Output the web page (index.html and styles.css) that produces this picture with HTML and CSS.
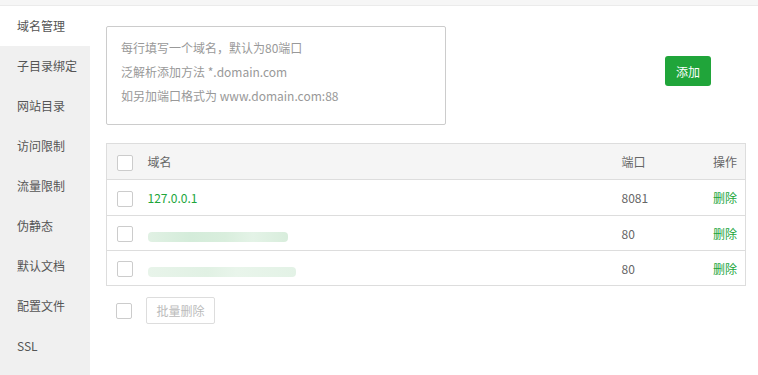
FILE: index.html
```html
<!DOCTYPE html>
<html>

<head>
  <title>站点修改</title>
  <link rel="stylesheet" href="styles.css">
</head>

<body>
  <div class="top-strip"></div>

  <div class="layout">
    <!-- Left tab menu -->
    <ul class="side-menu">
      <li class="active">域名管理</li>
      <li>子目录绑定</li>
      <li>网站目录</li>
      <li>访问限制</li>
      <li>流量限制</li>
      <li>伪静态</li>
      <li>默认文档</li>
      <li>配置文件</li>
      <li>SSL</li>
    </ul>

    <div class="content">
      <!-- Domain input -->
      <div class="add-row">
        <div class="domain-input">
          <p>每行填写一个域名，默认为80端口</p>
          <p>泛解析添加方法 *.domain.com</p>
          <p>如另加端口格式为 www.domain.com:88</p>
        </div>
        <button class="btn-green">添加</button>
      </div>

      <!-- Domain list -->
      <table class="domain-table">
        <colgroup>
          <col class="w-check">
          <col>
          <col class="w-port">
          <col class="w-op">
        </colgroup>
        <thead>
          <tr>
            <th class="col-check"><span class="checkbox"></span></th>
            <th>域名</th>
            <th>端口</th>
            <th class="col-op">操作</th>
          </tr>
        </thead>
        <tbody>
          <tr class="first">
            <td class="col-check"><span class="checkbox"></span></td>
            <td><a class="green">127.0.0.1</a></td>
            <td>8081</td>
            <td class="col-op"><a class="green">删除</a></td>
          </tr>
          <tr>
            <td class="col-check"><span class="checkbox"></span></td>
            <td><span class="blurred"></span></td>
            <td>80</td>
            <td class="col-op"><a class="green">删除</a></td>
          </tr>
          <tr>
            <td class="col-check"><span class="checkbox"></span></td>
            <td><span class="blurred long"></span></td>
            <td>80</td>
            <td class="col-op"><a class="green">删除</a></td>
          </tr>
        </tbody>
      </table>

      <div class="batch-row">
        <span class="checkbox"></span>
        <button class="btn-disabled">批量删除</button>
      </div>
    </div>
  </div>
</body>

</html>
```

FILE: styles.css
```css
body {
  margin: 0;
  font-family: "Noto Sans CJK SC", "Liberation Sans", sans-serif;
  font-size: 12px;
  color: #555;
  background-color: #fff;
}

.top-strip {
  height: 5px;
  background-color: #f6f6f6;
  border-bottom: 1px solid #ebebeb;
}

.layout {
  display: flex;
  height: 369px;
}

.side-menu {
  list-style: none;
  margin: 0;
  padding: 0;
  width: 90px;
  flex: none;
  background-color: #f0f0f0;
}

.side-menu li {
  height: 40px;
  line-height: 40px;
  padding-left: 17px;
  color: #555;
}

.side-menu li.active {
  background-color: #fff;
}

.content {
  flex: 1;
  padding: 20px 12px 0 16px;
}

.add-row {
  display: flex;
  align-items: flex-start;
}

.domain-input {
  width: 310px;
  height: 78px;
  padding: 9px 14px 10px 14px;
  border: 1px solid #ccc;
  border-radius: 2px;
  color: #999;
}

.domain-input p {
  margin: 0;
  line-height: 24px;
}

.btn-green {
  margin-left: 219px;
  margin-top: 30px;
  width: 46px;
  height: 30px;
  background-color: #20a53a;
  color: #fff;
  border: none;
  border-radius: 3px;
  font-family: inherit;
  font-size: 12px;
}

.domain-table {
  width: 640px;
  margin-top: 18px;
  table-layout: fixed;
  border-collapse: collapse;
  border: 1px solid #ddd;
}

.w-check {
  width: 41px;
}

.w-port {
  width: 80px;
}

.w-op {
  width: 44px;
}

.domain-table th,
.domain-table td {
  height: 34px;
  padding: 0;
  text-align: left;
  font-weight: normal;
  color: #666;
  border-bottom: 1px solid #ddd;
}

.domain-table thead th {
  height: 35px;
}

.domain-table tr.first td {
  height: 35px;
}

.domain-table thead tr {
  background-color: #f5f5f5;
}

.domain-table .col-check {
  padding-left: 10px;
}

.domain-table .col-op {
  text-align: right;
  padding-right: 8px;
}

.checkbox {
  display: inline-block;
  width: 14px;
  height: 14px;
  border: 1px solid #ccc;
  border-radius: 2px;
  background-color: #fff;
  vertical-align: middle;
}

.green {
  color: #20a53a;
}

.blurred {
  display: inline-block;
  width: 140px;
  height: 10px;
  margin-top: 4px;
  border-radius: 4px;
  vertical-align: middle;
  background: linear-gradient(90deg, #e1f1e4 0%, #d4ecda 30%, #d9eedd 55%, #e4f3e7 75%, #d8eddc 100%);
}

.blurred.long {
  width: 148px;
  background: linear-gradient(90deg, #e8f4ea 0%, #e1f1e4 40%, #e9f5eb 60%, #e3f2e6 100%);
}

.batch-row {
  display: flex;
  align-items: center;
  gap: 14px;
  margin-top: 11px;
  padding-left: 10px;
}

.btn-disabled {
  width: 69px;
  height: 27px;
  background-color: #fff;
  border: 1px solid #ddd;
  border-radius: 2px;
  color: #bbb;
  font-family: inherit;
  font-size: 12px;
}
```
